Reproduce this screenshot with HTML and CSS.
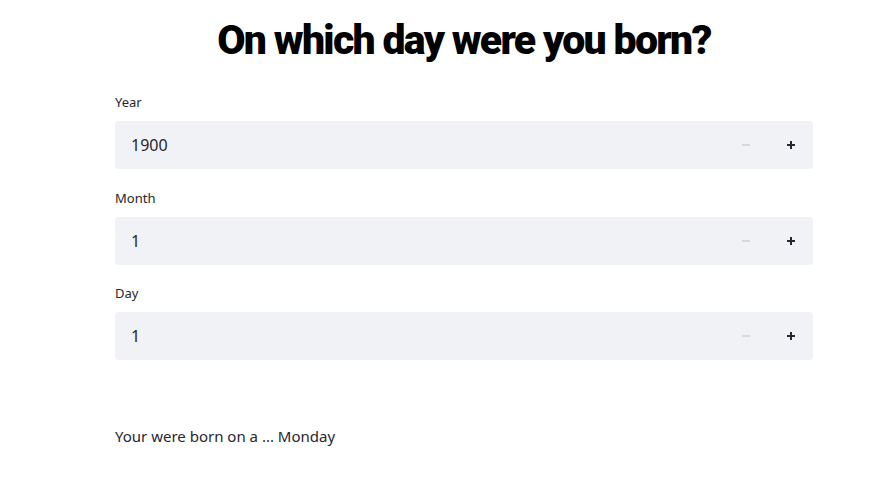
FILE: index.html
```html
<!DOCTYPE html>
<html>
<head>
<meta charset="utf-8">
<link rel="stylesheet" href="styles.css">
</head>
<body>
<main class="main">
  <h1 class="title">On which day were you born?</h1>
  <div class="field">
    <label class="label">Year</label>
    <div class="input">
      <span class="value">1900</span>
      <div class="steps">
        <span class="step disabled"><svg width="10" height="10" viewBox="0 0 10 10"><rect x="1" y="4" width="8" height="2" fill="currentColor"/></svg></span>
        <span class="step"><svg width="10" height="10" viewBox="0 0 10 10"><rect x="1" y="4" width="8" height="2" fill="currentColor"/><rect x="4" y="1" width="2" height="8" fill="currentColor"/></svg></span>
      </div>
    </div>
  </div>
  <div class="field">
    <label class="label">Month</label>
    <div class="input">
      <span class="value">1</span>
      <div class="steps">
        <span class="step disabled"><svg width="10" height="10" viewBox="0 0 10 10"><rect x="1" y="4" width="8" height="2" fill="currentColor"/></svg></span>
        <span class="step"><svg width="10" height="10" viewBox="0 0 10 10"><rect x="1" y="4" width="8" height="2" fill="currentColor"/><rect x="4" y="1" width="2" height="8" fill="currentColor"/></svg></span>
      </div>
    </div>
  </div>
  <div class="field">
    <label class="label">Day</label>
    <div class="input">
      <span class="value">1</span>
      <div class="steps">
        <span class="step disabled"><svg width="10" height="10" viewBox="0 0 10 10"><rect x="1" y="4" width="8" height="2" fill="currentColor"/></svg></span>
        <span class="step"><svg width="10" height="10" viewBox="0 0 10 10"><rect x="1" y="4" width="8" height="2" fill="currentColor"/><rect x="4" y="1" width="2" height="8" fill="currentColor"/></svg></span>
      </div>
    </div>
  </div>
  <p class="result">Your were born on a ... Monday</p>
</main>
</body>
</html>
```
FILE: styles.css
```css
html, body {
  margin: 0;
  padding: 0;
  background: #ffffff;
}
body {
  font-family: "Noto Sans", "Open Sans", sans-serif;
  color: rgb(38, 39, 48);
  width: 884px;
  height: 480px;
  overflow: hidden;
}
.main {
  width: 698px;
  margin: 0 auto 0 115px;
  padding-top: 12px;
  display: flex;
  flex-direction: column;
}
.title {
  font-family: Roboto, "Liberation Sans", sans-serif;
  font-weight: 900;
  font-size: 41px;
  letter-spacing: -1.7px;
  line-height: 56px;
  margin: 0 0 24px;
  text-align: center;
  color: #000;
}
.field {
  display: flex;
  flex-direction: column;
  margin-bottom: 18.5px;
}
.label {
  font-size: 13px;
  line-height: 20px;
  margin-bottom: 9px;
  color: rgb(38, 39, 48);
}
.input {
  height: 48px;
  background: #f0f2f6;
  border-radius: 4px;
  display: flex;
  align-items: center;
  justify-content: space-between;
}
.value {
  padding-left: 16px;
  font-size: 16px;
  color: rgb(38, 39, 48);
}
.steps {
  display: flex;
  height: 100%;
}
.step {
  width: 45px;
  display: flex;
  align-items: center;
  justify-content: center;
  color: rgb(38, 39, 48);
}
.step.disabled {
  color: #d5d8de;
}
.result {
  margin: 45px 0 0;
  font-size: 15px;
  line-height: 24px;
}
```
